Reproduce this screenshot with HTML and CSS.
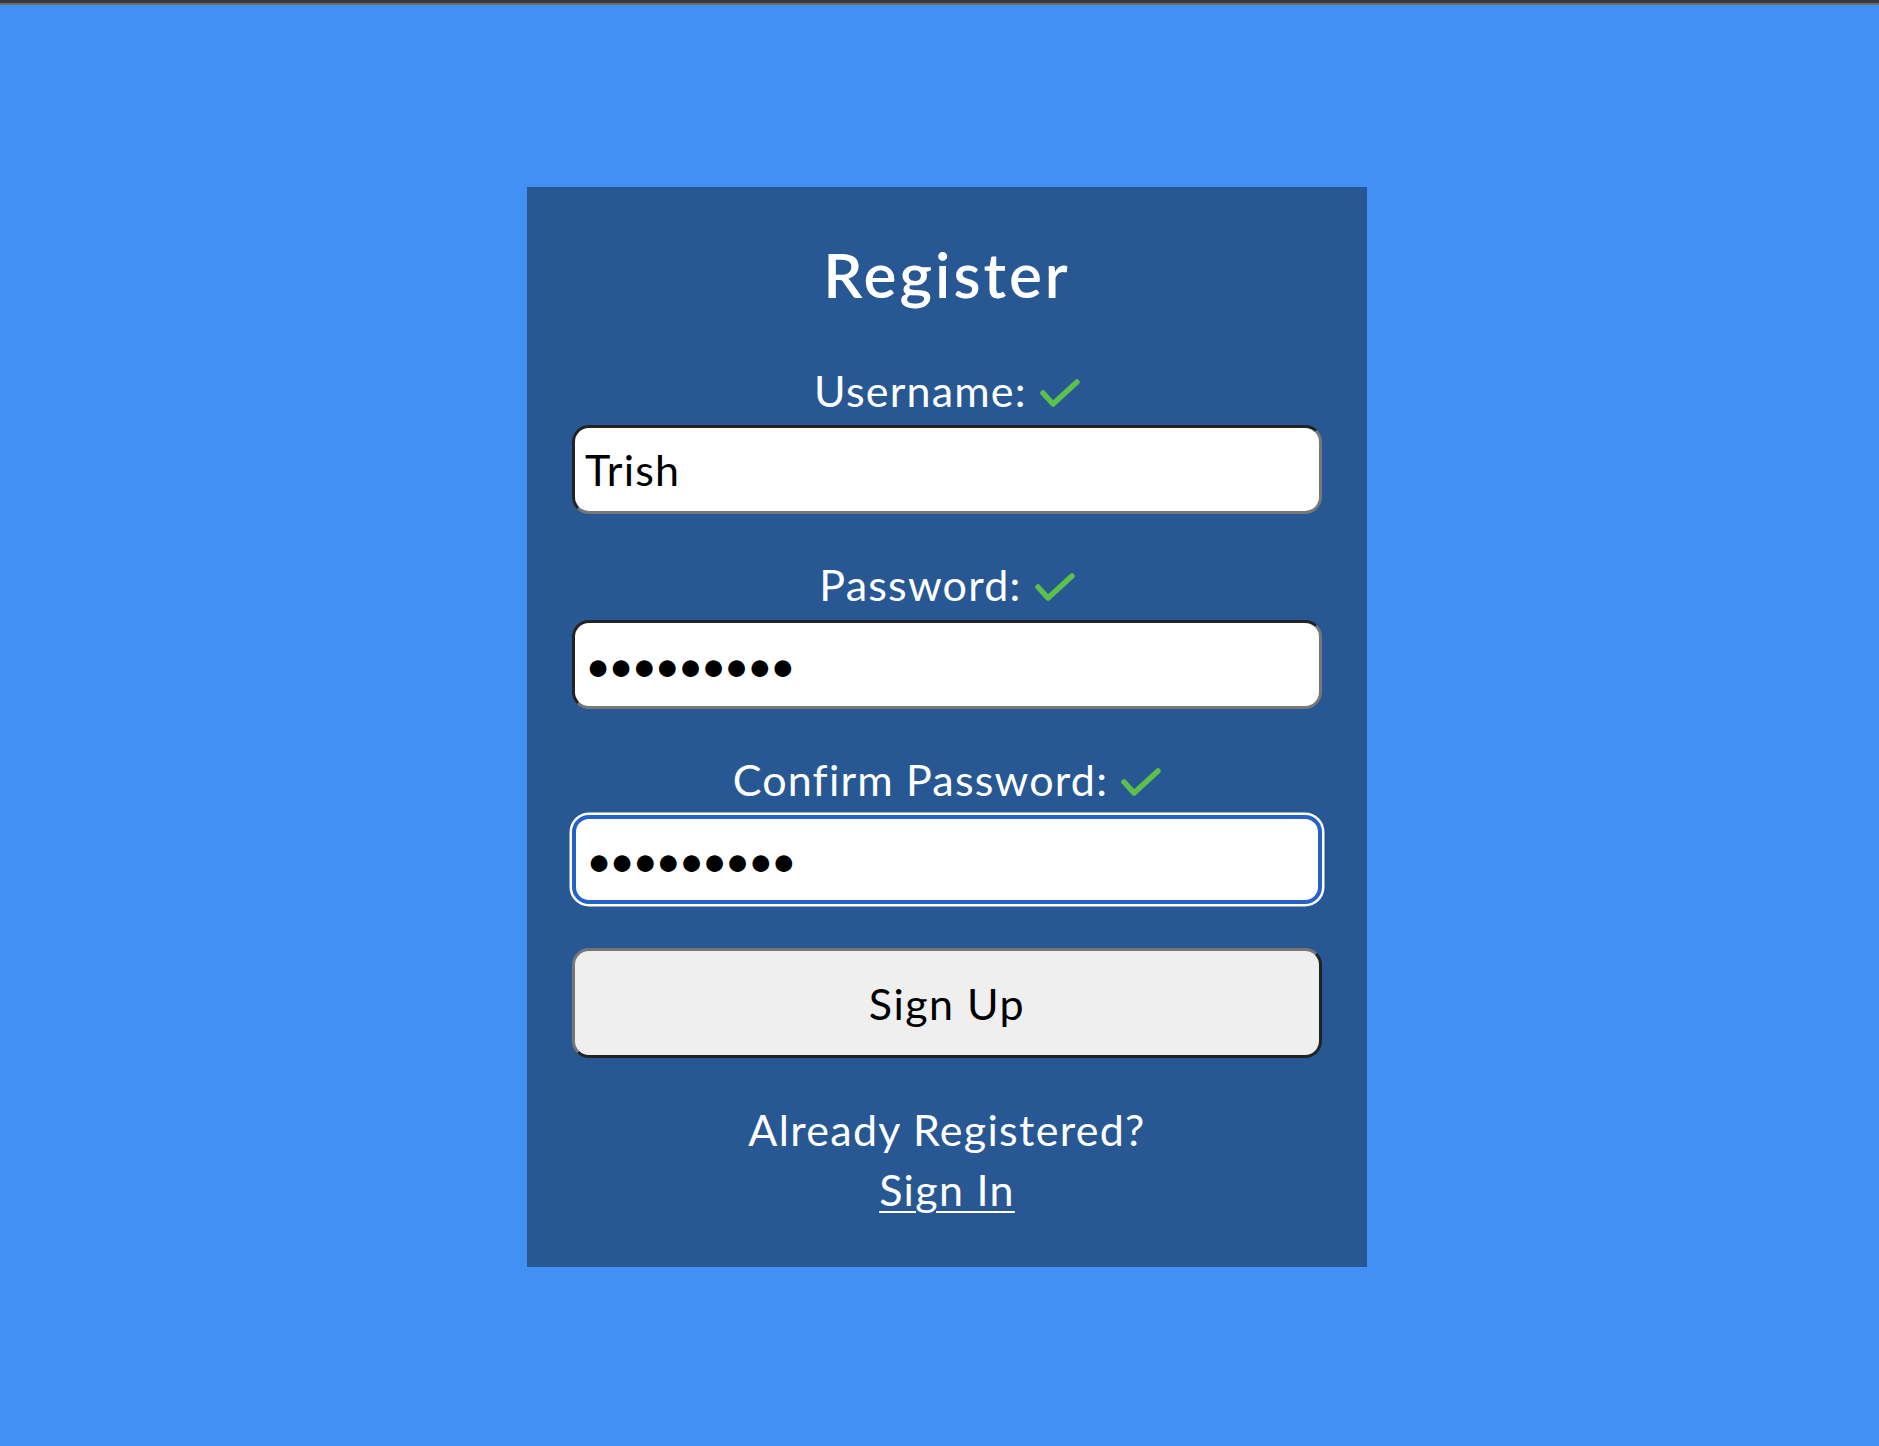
FILE: index.html
```html
<!DOCTYPE html>
<html lang="en">
<head>
<meta charset="utf-8">
<title>Register</title>
<link rel="stylesheet" href="styles.css">
</head>
<body>
<div class="topbar"></div>
<main class="page">
  <form class="card">
    <h1 class="title">Register</h1>
    <div class="field field--first">
      <label class="label" for="username">Username: <svg class="check" viewBox="0 0 41 29" width="41" height="29"><polyline points="4,15 14,26 38,4"/></svg></label>
      <input class="input" id="username" type="text" value="Trish">
    </div>
    <div class="field">
      <label class="label" for="password">Password: <svg class="check" viewBox="0 0 41 29" width="41" height="29"><polyline points="4,15 14,26 38,4"/></svg></label>
      <input class="input input--secret" id="password" type="password" value="secret123">
    </div>
    <div class="field">
      <label class="label" for="confirm">Confirm Password: <svg class="check" viewBox="0 0 41 29" width="41" height="29"><polyline points="4,15 14,26 38,4"/></svg></label>
      <input class="input input--secret input--focus" id="confirm" type="password" value="secret123">
    </div>
    <button class="btn" type="button">Sign Up</button>
    <p class="footer">Already Registered?<br><a class="link" href="#">Sign In</a></p>
  </form>
</main>
</body>
</html>
```

FILE: styles.css
```css
html, body {
  margin: 0;
  padding: 0;
}

body {
  background: #4290f5;
  font-family: "Lato", "Open Sans", "DejaVu Sans", sans-serif;
  min-height: 1446px;
}

.topbar {
  height: 3px;
  background: #3a3a3c;
  border-bottom: 2px solid #6d6d70;
}

.page {
  display: flex;
  flex-direction: column;
  align-items: center;
  padding-top: 182px;
  padding-left: 15px;
}

.card {
  width: 840px;
  box-sizing: border-box;
  background: #275894;
  padding: 47px 45px 47px;
  display: flex;
  flex-direction: column;
}

.title {
  margin: 0;
  color: #ffffff;
  font-size: 62px;
  line-height: 80px;
  font-weight: 600;
  letter-spacing: 3px;
  text-align: center;
}

.field {
  display: flex;
  flex-direction: column;
  margin-top: 41px;
}

.field--first {
  margin-top: 47px;
}

.label {
  display: block;
  color: #ffffff;
  font-size: 43px;
  line-height: 60px;
  letter-spacing: 1.2px;
  text-align: center;
}

.check {
  vertical-align: baseline;
  fill: none;
  stroke: #5cc14b;
  stroke-width: 5.5;
  stroke-linecap: round;
  stroke-linejoin: round;
}

.input {
  margin: 4px 0 0;
  height: 89px;
  box-sizing: border-box;
  width: 100%;
  background: #ffffff;
  border-style: solid;
  border-width: 3.5px;
  border-color: #222222 #777777 #777777 #222222;
  border-radius: 17px;
  padding: 0 10px;
  font-family: "Lato", "Open Sans", sans-serif;
  font-size: 43px;
  letter-spacing: 1.2px;
  color: #000000;
  outline: none;
}

.input--secret {
  margin-top: 5px;
  font-size: 45px;
  letter-spacing: -3px;
  padding-left: 10px;
}

.input--focus {
  border-width: 4px;
  border-color: #2562c8;
  box-shadow: 0 0 0 2.5px #ffffff;
}

.btn {
  margin-top: 44px;
  height: 110px;
  width: 100%;
  box-sizing: border-box;
  background: #efefef;
  border-style: solid;
  border-width: 3.5px;
  border-color: #777777 #222222 #222222 #777777;
  border-radius: 17px;
  font-family: "Lato", "Open Sans", sans-serif;
  font-size: 43px;
  letter-spacing: 1.5px;
  color: #000000;
  padding: 0;
}

.footer {
  margin: 42px 0 0;
  color: #ffffff;
  font-size: 43px;
  line-height: 60px;
  letter-spacing: 1.3px;
  text-align: center;
}

.link {
  color: #ffffff;
  text-decoration: underline;
  text-decoration-thickness: 2px;
  text-underline-offset: 5px;
}
```
